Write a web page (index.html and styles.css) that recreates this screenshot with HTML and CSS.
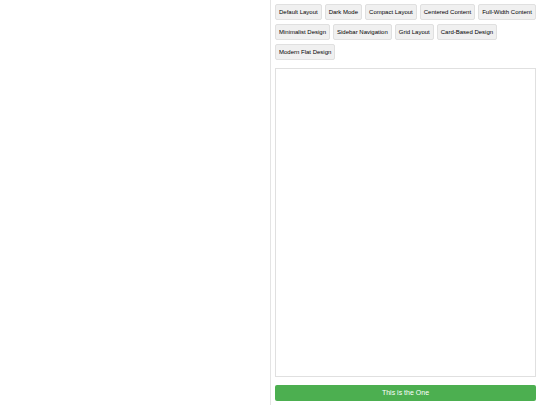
FILE: index.html
```html
<!DOCTYPE html>
<html lang="en">
<head>
  <meta charset="UTF-8" />
  <meta name="viewport" content="width=device-width, initial-scale=1.0" />
  <title>Layout Preview</title>
  <link rel="stylesheet" href="styles.css">
</head>
<body>
  <div class="editor"></div>

  <div class="preview">
    <div class="tabs">
      <button class="tab" type="button">Default Layout</button>
      <button class="tab" type="button">Dark Mode</button>
      <button class="tab" type="button">Compact Layout</button>
      <button class="tab" type="button">Centered Content</button>
      <button class="tab" type="button">Full-Width Content</button>
      <button class="tab" type="button">Minimalist Design</button>
      <button class="tab" type="button">Sidebar Navigation</button>
      <button class="tab" type="button">Grid Layout</button>
      <button class="tab" type="button">Card-Based Design</button>
      <button class="tab" type="button">Modern Flat Design</button>
    </div>

    <div class="preview-frame"></div>

    <button class="choose" type="button">This is the One</button>
  </div>
</body>
</html>
```

FILE: styles.css
```css
* {
  box-sizing: border-box;
}

body {
  font-family: "Liberation Sans", Arial, sans-serif;
  background-color: #fff;
  margin: 0;
  display: flex;
  height: 100vh;
}

.editor {
  width: 50%;
}

.preview {
  width: 50%;
  display: flex;
  flex-direction: column;
  gap: 8px;
  padding: 4px;
  border-left: 1px solid #e4e4e4;
}

.tabs {
  display: flex;
  flex-wrap: wrap;
  gap: 4px 3px;
}

button {
  font-family: inherit;
  cursor: pointer;
}

.tab {
  padding: 3px;
  border: 1px solid #e0e0e0;
  border-radius: 2px;
  background-color: #f0f0f0;
  color: #000;
  font-size: 6px;
  line-height: 8px;
}

.tab:hover {
  background-color: #e0e0e0;
}

.preview-frame {
  flex: 1;
  border: 1px solid #e0e0e0;
}

.choose {
  padding: 4px;
  border: none;
  border-radius: 2px;
  background-color: #4caf50;
  color: #fff;
  font-size: 7px;
  line-height: 8px;
}

.choose:hover {
  background-color: #45a049;
}
```
